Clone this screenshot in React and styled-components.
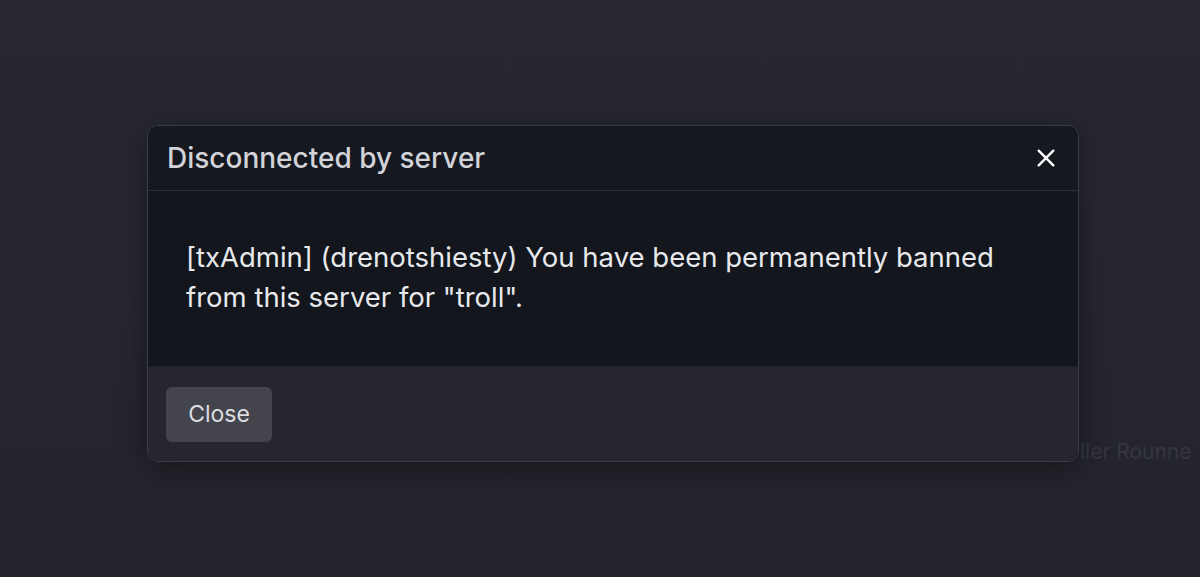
import styled, { createGlobalStyle } from 'styled-components';

const GlobalStyle = createGlobalStyle`
  html, body {
    margin: 0;
    padding: 0;
    background: #26262f;
    font-family: Inter, "Noto Sans", sans-serif;
  }
`;

function CloseIcon() {
  return (
    <svg width="22" height="22" viewBox="0 0 24 24" fill="none" stroke="#ffffff" strokeWidth="2.6" strokeLinecap="round">
      <path d="M4 4L20 20M20 4L4 20" />
    </svg>
  );
}

function App() {
  return (
    <Page>
      <GlobalStyle />
      <Backdrop>
        <Modal>
          <Header>
            <Title>Disconnected by server</Title>
            <IconButton aria-label="close">
              <CloseIcon />
            </IconButton>
          </Header>
          <Body>
            [txAdmin] (drenotshiesty) You have been permanently banned from this server for "troll".
          </Body>
          <Footer>
            <Button>Close</Button>
          </Footer>
        </Modal>
        <Ghost>ller Rounne</Ghost>
      </Backdrop>
    </Page>
  );
}

export default App;

const Page = styled.div`
  width: 1200px;
  height: 577px;
  overflow: hidden;
  background: linear-gradient(180deg, #272730 0%, #25262e 60%, #23242b 100%);
`;

const Backdrop = styled.div`
  position: relative;
  padding: 125px 0 0 147px;
`;

const Modal = styled.div`
  width: 930px;
  border: 1px solid #3b3c45;
  border-radius: 11px;
  overflow: hidden;
  background: #14161d;
  box-shadow: 0 6px 30px rgba(0, 0, 0, 0.35);
  position: relative;
  z-index: 1;
`;

const Header = styled.div`
  display: flex;
  align-items: center;
  justify-content: space-between;
  height: 64px;
  padding: 0 21px 0 19px;
  background: #161820;
  border-bottom: 1px solid #2f313a;
`;

const Title = styled.h2`
  margin: 0;
  font-size: 28px;
  font-weight: 500;
  color: #d2d3d8;
`;

const IconButton = styled.button`
  display: flex;
  align-items: center;
  justify-content: center;
  padding: 0;
  border: none;
  background: none;
  cursor: pointer;
`;

const Body = styled.div`
  height: 175px;
  box-sizing: border-box;
  padding: 46px 60px 0 38px;
  background: #13161d;
  color: #e8e9ec;
  font-size: 27.5px;
  line-height: 40px;
`;

const Footer = styled.div`
  display: flex;
  align-items: center;
  height: 94px;
  padding: 0 18px;
  background: #25262e;
  border-top: 1px solid #1c1e25;
`;

const Button = styled.button`
  width: 106px;
  height: 55px;
  border: none;
  border-radius: 6px;
  background: #43444c;
  color: #dcdde1;
  font-family: Inter, "Noto Sans", sans-serif;
  font-size: 23px;
  cursor: pointer;
`;

const Ghost = styled.span`
  position: absolute;
  left: 1080px;
  top: 439px;
  font-size: 21px;
  color: #35363f;
  white-space: nowrap;
`;
